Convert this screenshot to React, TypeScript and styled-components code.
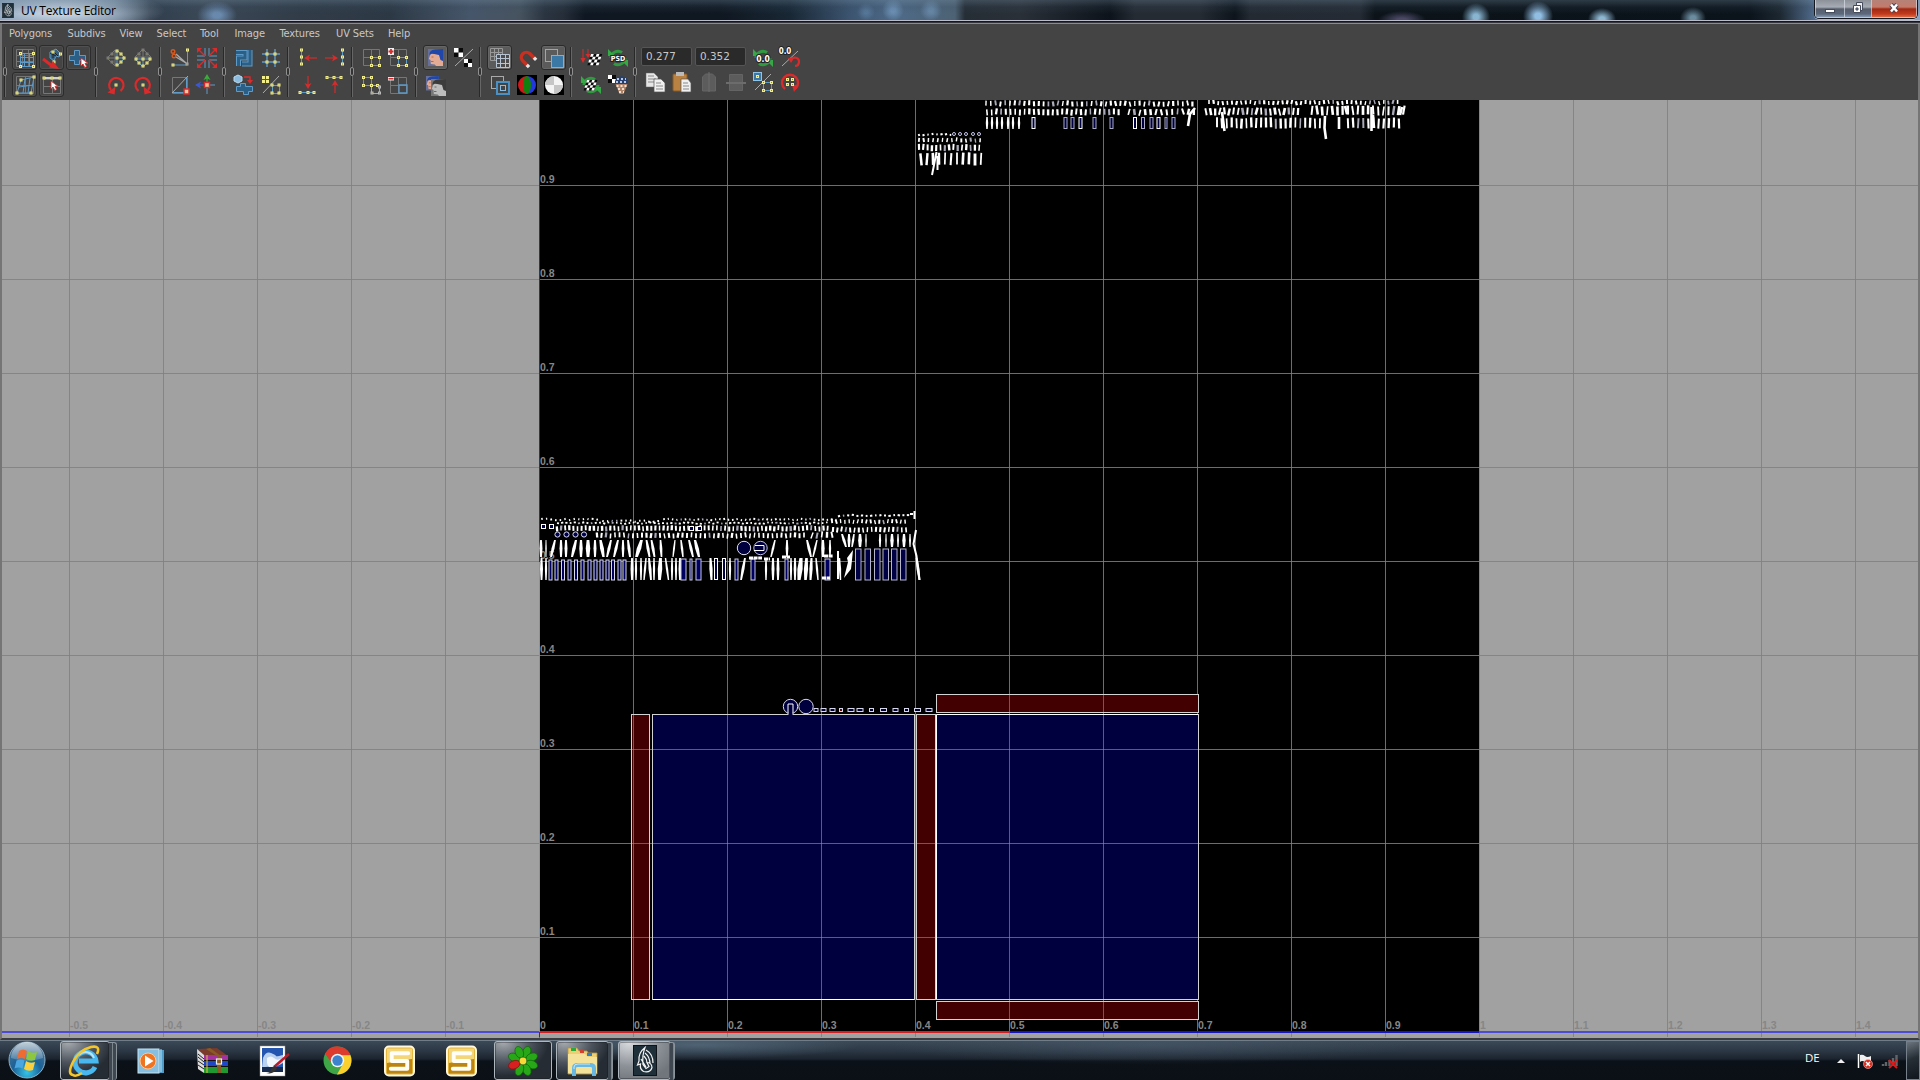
import React from 'react';
import styled, { createGlobalStyle, css } from 'styled-components';

const Global = createGlobalStyle`
  html, body { margin: 0; padding: 0; background: #000; }
  body { width: 1920px; height: 1080px; overflow: hidden; font-family: "Noto Sans", sans-serif; }
  * { box-sizing: border-box; }
  svg { display: block; flex: none; }
`;

const Screen = styled.div`
  width: 1920px;
  height: 1080px;
  display: flex;
  flex-direction: column;
  background: #444;
`;

/* ---------- title bar ---------- */

const blob = (x: number, y: number, rx: number, ry: number, c: string) =>
  `radial-gradient(${rx}px ${ry}px at ${x}px ${y}px, ${c} 0%, ${c} 20%, transparent 100%)`;

const TitleBar = styled.header`
  height: 24px;
  flex: none;
  display: flex;
  align-items: flex-start;
  border-bottom: 1px solid #8a8a8a;
  box-shadow: inset 0 -1px #35363e, inset 0 -2px #17161e, inset 0 -3px #b9bcc8;
  background:
    linear-gradient(180deg, rgba(110,135,155,.35) 0, rgba(60,80,100,.18) 7px, transparent 14px),
    ${blob(60, 11, 105, 22, 'rgba(205,218,232,.9)')},
    ${blob(217, 15, 20, 14, 'rgba(125,165,210,.7)')},
    ${blob(866, 12, 9, 9, 'rgba(105,145,185,.5)')},
    ${blob(893, 10, 11, 11, 'rgba(125,165,205,.65)')},
    ${blob(931, 10, 11, 11, 'rgba(125,165,205,.55)')},
    ${blob(1402, 20, 24, 9, 'rgba(90,85,120,.8)')},
    ${blob(1476, 17, 14, 14, 'rgba(150,198,228,.9)')},
    ${blob(1538, 16, 15, 15, 'rgba(160,208,248,.9)')},
    ${blob(1602, 19, 14, 11, 'rgba(155,200,228,.9)')},
    ${blob(1693, 18, 13, 11, 'rgba(130,170,190,.8)')},
    linear-gradient(90deg, #6e8ba8 0, #587087 115px, #303e4d 150px, #3b4856 205px, #313c48 300px,
      #2c3844 390px, #46566a 470px, #46535f 520px, #2a3440 545px, #252e39 563px, #0f1822 585px,
      #0f1721 720px, #182734 790px, #3c5470 850px, #4e6a88 895px, #4d6274 955px, #252d35 965px,
      #2a3038 1020px, #0d131a 1110px, #252b33 1135px, #252b33 1200px, #0d141b 1235px, #232a32 1250px,
      #242b34 1360px, #0c1319 1375px, #0b131b 1750px, #1c2730 1780px, #6080a8 1825px, #5878a5 1890px, #8ea6c2 1920px);
`;
const TitleText = styled.span`
  margin: 2px 0 0 7px;
  font: 12px/17px "Open Sans", "Noto Sans", sans-serif;
  letter-spacing: -0.22px;
  color: #000;
  flex: 1;
`;
const AppIcon = styled.div`margin: 3px 0 0 2px;`;
const WindowButtons = styled.div`
  display: flex;
  height: 19px;
  width: 104px;
  margin-right: 2px;
  border: 1px solid #15181e;
  border-top: 0;
  border-radius: 0 0 5px 5px;
  overflow: hidden;
  box-shadow: 0 1px rgba(210,220,235,.6);
`;
const WinBtn = styled.div<{ $w: number; $close?: boolean }>`
  width: ${p => p.$w}px;
  display: flex;
  justify-content: center;
  padding-top: 1px;
  border: 1px solid rgba(220,225,235,.65);
  border-top: 0;
  border-right-width: ${p => (p.$close ? 1 : 0)}px;
  background: ${p => p.$close
    ? 'linear-gradient(180deg,#b58278 0,#c47b6b 7px,#9f2a13 9px,#c43a1c 14px,#e07a50 18px)'
    : 'linear-gradient(180deg,#8d9299 0,#a6acb5 7px,#575e6b 9px,#5c687b 14px,#91a8c4 18px)'};
`;

/* ---------- menu + toolbar ---------- */

const Client = styled.main`
  height: 1016px;
  flex: none;
  display: flex;
  flex-direction: column;
  border-left: 2px solid #757575;
  border-right: 2px solid #757575;
  border-bottom: 2px solid #3a3c40;
  background: #444;
`;
const MenuBar = styled.nav`
  height: 19px;
  display: flex;
  padding: 1px 0 0 7px;
  flex: none;
`;
const MenuItem = styled.span<{ $w: number }>`
  width: ${p => p.$w}px;
  font: 11px/17px "DejaVu Sans Condensed", "Noto Sans", sans-serif;
  letter-spacing: -0.12px;
  color: #c8c8c8;
  white-space: nowrap;
`;
const ToolBar = styled.div`
  height: 57px;
  display: flex;
  flex: none;
  padding-top: 1px;
`;
const Group = styled.div`
  display: flex;
  padding-right: 1px;
`;
const Grip = styled.div`
  width: 9px;
  height: 54px;
  padding: 3px 0 0 0;
`;
const Rows = styled.div`
  display: flex;
  flex-direction: column;
`;
const Row = styled.div<{ $lift?: number }>`
  display: flex;
  align-items: center;
  height: 27px;
  margin-top: ${p => -(p.$lift ?? 0)}px;
`;
const Tool = styled.div<{ $look?: 'raised' | 'on' }>`
  width: 25px;
  height: 25px;
  margin: 1px;
  display: flex;
  align-items: center;
  justify-content: center;
  border: 1px solid transparent;
  border-radius: 3px;
  ${p => p.$look === 'raised' && css`border-color: #2c2c2c; box-shadow: inset 0 0 0 1px #505050;`}
  ${p => p.$look === 'on' && css`border-color: #2a2a2a; background: #5b5b5b; box-shadow: inset 0 0 0 1px #666;`}
`;
const NumField = styled.div`
  width: 51px;
  height: 19px;
  margin: 0 3px 2px 0;
  padding-left: 4px;
  background: #2a2a2a;
  border: 1px solid #555;
  border-radius: 2px;
  color: #c8c8c8;
  font: 10.4px/16px "DejaVu Sans", sans-serif;
`;

/* ---------- icons ---------- */

type P = [number, number];
const Y = '#f2ee8c';
const B = '#5e9bc8';
const G = '#777';
const R = '#d92b2b';

const Dots = ({ p, c = Y }: { p: P[]; c?: string }) => (
  <g>
    {p.map(([x, y], i) => (
      <g key={i}>
        <rect x={x - 1.5} y={y - 1.5} width="3" height="3" fill={c} />
        <rect x={x - 0.5} y={y - 0.5} width="1" height="1" fill="#8d8a40" />
      </g>
    ))}
  </g>
);
const L = ({ d, c = B, w = 1, f = 'none' }: { d: string; c?: string; w?: number; f?: string }) => (
  <path d={d} stroke={c} strokeWidth={w} fill={f} />
);
const Cursor = ({ x, y }: { x: number; y: number }) => (
  <path transform={`translate(${x} ${y})`} d="M0 0v8l2-2 1.8 3.5 1.8-1L4 5.3h3z" fill="#fff" stroke={R} strokeWidth=".9" />
);
const Arrow = ({ r, x = 12, y = 12, c = R }: { r: number; x?: number; y?: number; c?: string }) => (
  <g transform={`translate(${x} ${y}) rotate(${r})`}>
    <path d="M-6 0H3" stroke={c} strokeWidth="1.2" />
    <path d="M1-3.5L7 0 1 3.5 2.5 0z" fill={c} />
  </g>
);
const Spin = ({ flip, c = R }: { flip?: boolean; c?: string }) => (
  <g transform={flip ? 'matrix(-1 0 0 1 24 0)' : undefined}>
    <path d="M7.500 18A7.200 7.200 0 1 1 17 17" fill="none" stroke={c} strokeWidth="2.2" />
    <path d="M12.500 13.500l1 8 7-2z" fill={c} />
  </g>
);
const Sync = () => (
  <g fill="none" stroke="#2f9a3f" strokeWidth="3">
    <path d="M5 12a7 7 0 0 1 11-5.500" /><path d="M19 12a7 7 0 0 1-11 5.500" />
    <path d="M2 3v7h7z M22 21v-7h-7z" fill="#36a846" stroke="none" />
  </g>
);
const Checks = ({ x, y, n = 4, s = 2.5, skew = 0 }: { x: number; y: number; n?: number; s?: number; skew?: number }) => (
  <g transform={`translate(${x} ${y}) skewX(${skew})`}>
    <rect width={n * s} height={n * s} fill="#0a0a0a" />
    {Array.from({ length: n * n }, (_, i) => [i % n, Math.floor(i / n)])
      .filter(([a, b]) => (a + b) % 2 === 0)
      .map(([a, b]) => <rect key={`${a}-${b}`} x={a * s} y={b * s} width={s} height={s} fill="#fff" />)}
  </g>
);
const Plus = ({ d }: { d: string }) => <path d={d} fill="#2b5f86" stroke={B} strokeWidth="1" />;
const Band = ({ d }: { d: string }) => (
  <g fill="none">
    <path d={d} stroke={B} strokeWidth="5" />
    <path d={d} stroke="#2b5f86" strokeWidth="3" />
  </g>
);
const Face = ({ x, y, gray }: { x: number; y: number; gray?: boolean }) => (
  <g transform={`translate(${x} ${y})`}>
    <rect width="15" height="17" fill={gray ? '#777' : '#66709a'} />
    <path d="M2.500 5L.8 10l1.700 1 .3 4 4 .5L8 17h7V5z" fill={gray ? '#bdbdbd' : '#e3ab94'} />
    <path d="M1.500 6Q1 1 7 .5L15 0v12l-2.500-1L11 6 4 4.500z" fill={gray ? '#3c3c3c' : '#1f46a8'} />
    <path d="M3.500 8h2M3 12.500h2.500" stroke={gray ? '#555' : '#9a5c4c'} strokeWidth=".8" />
  </g>
);
const Tag = ({ x, y, s, children }: { x: number; y: number; s: number; children: string }) => (
  <text x={x} y={y} textAnchor="middle" fontSize={s} fontWeight="bold" fontFamily="DejaVu Sans Condensed, sans-serif" fill="#fff" stroke="#222" strokeWidth="2" paintOrder="stroke">{children}</text>
);

const ICONS: Record<string, React.ReactNode> = {
  lattice: <><L c={G} d="M3.500 3.500h17v17h-17zM3.500 9.500h17M3.500 15.500h17M9.500 3.500v17M15.500 3.500v17" /><L d="M7.500 7.500h13v13h-13zM7.500 11.500h13M7.500 16.500h13M11.500 7.500v13M16.500 7.500v13" /><Dots p={[[7.500, 7.500], [20.500, 7.500], [7.500, 20.500], [20.500, 20.500]]} /></>,
  smudge: <><path d="M10 6l6-3 5 5-2 3-3-1-2 5-4-3z" fill="#38617f" stroke={B} /><L c="#222" d="M10 7l6 3M13 5l5 5M13 4v8" /><Dots p={[[13, 6], [20.500, 8], [14, 16]]} /><path d="M3 13l8 6" stroke={R} strokeWidth="3" /><path d="M13 15l6 8-10-1.500z" fill={R} /></>,
  moveshell: <><Plus d="M2.500 9.500h5v-5h5v5h6v5h-6v4h-5v-4h-5z" /><Cursor x={14} y={12} /></>,
  warp: <><L c={G} d="M3.500 3.500h17v17h-17zM3.500 12.500h17M12.500 3.500v17" /><L d="M8 7l13-3-3 16H4zM6 14l14-2M12 6l-2 14M17 5l-2 15" /><Dots p={[[8, 7], [21, 4], [4, 20], [18, 20]]} /></>,
  moveuv: <><L c={G} d="M3.500 6.500h17v14h-17zM12.500 6.500v14M3.500 13.500h17" /><L c="#fff" w={1.5} d="M4 5h17" /><Dots p={[[4, 5], [20, 5], [12, 5]]} /><Cursor x={11} y={8} /></>,
  flipu: <><L c={G} d="M11 4l-8 8 8 8zM3 12h8" /><L d="M13 4l8 8-8 8zM13 12h8" /><Dots p={[[13, 5], [13, 12], [13, 19], [17, 8], [20, 12], [17, 16]]} /><Dots c="#777" p={[[8, 8], [4, 12], [8, 16]]} /></>,
  flipv: <><L c={G} d="M4 11l8-8 8 8zM12 3v8" /><L d="M4 13h16l-8 8zM12 13v8" /><Dots p={[[5, 13], [12, 13], [19, 13], [8, 17], [16, 17], [12, 20]]} /><Dots c="#777" p={[[12, 4], [8, 8], [16, 8]]} /></>,
  rotl: <><Spin flip /><Dots p={[[12, 12]]} /></>,
  rotr: <><Spin /><Dots p={[[12, 12]]} /></>,
  cut: <><L d="M19.500 5v14H4" /><Dots p={[[19.500, 4], [5, 19]]} /><Dots c="#aaa" p={[[19, 18]]} /><L c="#aaa" w={1.4} d="M8 8l10 9M8 11l10 6" /><circle cx="5" cy="5.500" r="1.800" fill="none" stroke="#d8581e" strokeWidth="1.4" /><circle cx="6" cy="10" r="1.800" fill="none" stroke="#d8581e" strokeWidth="1.4" /></>,
  split: <><L d="M10 2v8H2M14 2v8h8M10 22v-8H2M14 22v-8h8" /><path d="M10 10L3 3M14 10l7-7M10 14l-7 7M14 14l7 7" stroke={R} strokeWidth="1.4" /><path d="M2 2h5L2 7zM22 2h-5l5 5zM2 22h5l-5-5zM22 22h-5l5-5z" fill={R} /></>,
  move: <><L c={G} d="M4.500 4.500h15v16h-15z" /><L c="#aaa" d="M4 20L20 3" /><L d="M18.500 5v14.500H5" /><rect x="16" y="16" width="5" height="5" fill="#f4c7a0" stroke={R} strokeWidth="1.5" /></>,
  axis: <><Arrow r={-90} x={12} y={8} c="#3aad3a" /><Arrow r={180} x={7} y={12} c="#3c58d8" /><L d="M14 12h6M12 14v7" /><rect x="9.5" y="9.5" width="5" height="5" fill="#e8c090" stroke={R} strokeWidth="1.4" /></>,
  unfold: <><Band d="M4 6.500h9v5.500H6.500V20" /><Band d="M18 4v14h-8" /></>,
  gridsew: <><L w={1.4} d="M8 3v18M16 3v18M3 8h18M3 16h18" /><Dots p={[[8, 8], [16, 8], [8, 16], [16, 16]]} /></>,
  layout: <><Plus d="M4.500 13.500h4v-3h5v3h7v5h-4v3h-5v-3h-7z" /><path d="M2 4l4-2 4 2v4L6 10 2 8z" fill="#8cbde0" stroke="#b9dcf2" /><path d="M12 4h6v4" fill="none" stroke={R} strokeWidth="1.4" /><path d="M15 7h6l-3 4z" fill={R} /></>,
  align: <><L c="#aaa" d="M4 20L20 3" /><rect x="3" y="3" width="7" height="7" fill={Y} /><L c="#555" d="M6.5 3v7M3 6.5h7" /><L d="M13.500 12.500h7v8h-7z" /><Dots p={[[13, 12], [20, 12], [13, 20], [20, 20]]} /></>,
  alignl: <><L d="M5.500 4v15" /><Dots p={[[5.500, 4], [5.500, 11], [5.500, 18]]} /><Arrow r={180} x={15} /></>,
  alignr: <><L d="M19.500 4v15" /><Dots p={[[19.500, 4], [19.500, 11], [19.500, 18]]} /><Arrow r={0} x={8} /></>,
  alignb: <><L d="M4 19.500h15" /><Dots p={[[4, 19.500], [12, 19.500], [18, 19.500]]} /><Arrow r={90} y={9} /></>,
  alignt: <><L d="M4 4.500h15" /><Dots p={[[4, 4.500], [11, 4.500], [18, 4.500]]} /><Arrow r={-90} y={14} /></>,
  iso: <><L c={G} d="M3.500 3.500h16v16h-16zM3.500 11.500h16M11.500 3.500v16" /><L d="M11.500 11.500h8v8h-8z" /><Dots p={[[11.500, 11.500], [19.500, 11.500], [11.500, 19.500], [19.500, 19.500]]} /></>,
  isoadd: <><L c={G} d="M3.500 3.500h16v16h-16zM3.500 11.500h16M11.500 3.500v16" /><L d="M11.500 11.500h8v8h-8z" /><Dots p={[[11.500, 11.500], [19.500, 11.500], [11.500, 19.500], [19.500, 19.500]]} /><rect x="1" y="2" width="6" height="7" fill="#eee" /><L c={R} w={1.8} d="M1.500 5.500h5M4 3v5" /></>,
  isosel: <><L d="M3.500 4.500h8v8h-8zM11.500 12.500v7" /><L c="#aaa" d="M11.500 12.500h8v8h-8z" /><Dots p={[[3.500, 4.500], [11.500, 4.500], [3.500, 12.500], [11.500, 12.500], [17.500, 12.500]]} /><Dots c="#bbb" p={[[12, 20], [19.500, 20], [19.500, 14]]} /></>,
  isosub: <><L c={G} d="M3.500 4.500h16v16h-16zM3.500 12.500h16M11.500 4.500v16" /><L w={1.3} d="M12 12h8v8h-8z" /><rect x="1" y="4" width="6" height="3.500" fill="#eee" /><L c={R} w={1.5} d="M1.500 5.700h5" /></>,
  image: <Face x={4} y={3} />,
  checkdim: <><L c="#aaa" d="M4 20L22 3" /><Checks x={3} y={2} n={2} s={4.5} /><Checks x={13} y={13} n={2} s={4} /></>,
  imgratio: <><g transform="translate(2 3) scale(.85)"><Face x={0} y={0} /></g><g transform="translate(7 6)"><Face x={0} y={0} gray /></g></>,
  grid: <><L c="#999" d="M2.500 2.500h12v12h-12zM2.500 6.500h12M2.500 10.500h12M6.500 2.500v12M10.500 2.500v12" /><rect x="8.500" y="8.500" width="13" height="13" fill="#4c4c4c" /><L c="#b6c4d4" d="M8.500 8.500h13v13h-13zM8.500 12.500h13M8.500 17.500h13M12.500 8.500v13M17.500 8.500v13" /></>,
  magnet: <g transform="translate(1 1) rotate(-45 11 11) scale(.92)"><path d="M6.500 18v-7a5.500 5.500 0 0 1 11 0v7" fill="none" stroke="#c83020" strokeWidth="3.600" /><path d="M4.700 17h3.600v3.500H4.700zM15.700 17h3.600v3.500h-3.600z" fill="#e8e8e8" /></g>,
  shade: <><rect x="3.500" y="3.500" width="12" height="12" fill="none" stroke="#8fa9bd" /><rect x="9.500" y="9.500" width="12" height="12" fill="#3b78a6" stroke="#79b2dc" /></>,
  border: <><rect x="3.500" y="3.500" width="12" height="12" fill="none" stroke="#aaa" /><rect x="9" y="9" width="12" height="12" fill="#444" stroke="#4a90c4" strokeWidth="2" /><rect x="12.500" y="12.500" width="5" height="5" fill="none" stroke="#8bbbe0" /></>,
  rgb: <><rect x="2" y="2" width="20" height="20" fill="#000" /><path d="M12 3a9 9 0 0 0 0 18z" fill="#d01818" /><path d="M12 3a9 9 0 0 1 0 18z" fill="#2438e0" /><ellipse cx="12" cy="12" rx="4" ry="9" fill="#12800f" /></>,
  alpha: <><rect x="2" y="2" width="20" height="20" fill="#000" /><circle cx="12" cy="12" r="9" fill="#f4f4f4" /><path d="M12 3v9H3a9 9 0 0 1 9-9zM12 21v-9h9a9 9 0 0 1-9 9z" fill="#c6c6c6" /></>,
  bake: <><Checks x={12} y={8} n={4} s={2.800} skew={-18} /><path d="M4 3v10M9 3v6" stroke={R} /><path d="M1.500 12h5L4 17zM6.500 8h5L9 12z" fill={R} /></>,
  psd: <><Sync /><Tag x={12} y={15} s={7}>PSD</Tag></>,
  rebake: <><Sync /><Checks x={8} y={7} n={4} s={2.600} skew={-18} /></>,
  checkcone: <><Checks x={2} y={2} n={2} s={4} /><path d="M9.500 11h12l-4 10h-4z" fill="#b08468" /><path d="M10.500 13h10M12 16h7M13 19h5" stroke="#f1ded0" strokeDasharray="2 2" strokeWidth="2" /><path d="M9 11q-1-7 6.500-8 7.500 1 6.500 8z" fill="#28406e" /><path d="M10 9h12M11 6h9" stroke="#b7c8e6" strokeDasharray="2 2" strokeWidth="2" /></>,
  uvsync: <><Sync /><Tag x={12} y={15.5} s={8.5}>0.0</Tag></>,
  uvabs: <><L c="#aaa" d="M4 20L20 5" /><Tag x={7} y={8} s={8}>0.0</Tag><path d="M13 14a4.200 4.200 0 1 1 4 6" fill="none" stroke={R} strokeWidth="2.200" /><path d="M10 12h6l-3 5z" fill={R} /></>,
  copy: <><path d="M3 3h8l4 4v10H3z" fill="#e6e6e6" stroke="#666" strokeWidth=".5" /><path d="M5 6h6M5 9h8M5 12h8" stroke="#888" /><path d="M11 9h7l4 4v9H11z" fill="#f0f0f0" stroke="#555" strokeWidth=".7" /><path d="M13 13h5M13 16h7M13 19h7" stroke="#888" /></>,
  paste: <><rect x="3" y="4" width="14" height="17" rx="1" fill="#b98142" stroke="#8a5a24" /><rect x="6" y="2" width="8" height="4" fill="#bbb" /><path d="M11 9h7l3 4v9H11z" fill="#f0f0f0" stroke="#555" strokeWidth=".7" /><path d="M13 13h5M13 16h6M13 19h6" stroke="#888" /></>,
  dimu: <g fill="#5c5c5c" stroke="#646464"><path d="M5.500 7l3-3h7l3 3v14h-13z" /><path d="M12 2v20" stroke="#6c6c6c" /></g>,
  dimv: <g fill="#5c5c5c" stroke="#646464"><path d="M5.500 4.500h13v16h-13z" /><path d="M2 13h20" stroke="#6c6c6c" strokeWidth="2" /></g>,
  shellswap: <><L c="#aaa" d="M4 20L20 4" /><rect x="2.500" y="2.500" width="8" height="8" fill="#3b78a6" stroke="#8fc4ea" /><Dots p={[[6.500, 6.500]]} /><L d="M12.500 12.500h8v8h-8z" /><Dots p={[[12.500, 12.500], [20.500, 12.500], [12.500, 20.500], [20.500, 20.500]]} /></>,
  cycle: <><path d="M7 19A8 8 0 1 1 17 19" fill="none" stroke={R} strokeWidth="2.400" /><path d="M14 15h7l-5 7z" fill={R} /><Dots p={[[9.5, 9.5], [14.5, 9.5], [9.5, 14.5], [14.5, 14.5]]} /></>,
};

const Icon = ({ name, look }: { name: string; look?: 'raised' | 'on' }) => (
  <Tool $look={look}>
    <svg width="24" height="24" viewBox="0 0 24 24" overflow="visible">{ICONS[name]}</svg>
  </Tool>
);
const Handle = () => (
  <Grip>
    <svg width="6" height="50" viewBox="0 0 6 50">
      <path d="M2.500 0v20M2.500 29v21" stroke="#292929" />
      <path d="M3.500 0v20M3.500 29v21" stroke="#666" />
      <rect x="1.500" y="20.500" width="3" height="8" rx="1.500" fill="#333" stroke="#999" strokeWidth=".9" />
    </svg>
  </Grip>
);

const GROUPS: [string, string][] = [
  ['lattice* smudge* moveshell*', 'warp* moveuv*'],
  ['flipu flipv', 'rotl rotr'],
  ['cut split', 'move axis'],
  ['unfold gridsew', 'layout align'],
  ['alignl alignr', 'alignb alignt'],
  ['iso isoadd', 'isosel isosub'],
  ['image! checkdim', 'imgratio'],
  ['grid! magnet shade!', 'border rgb alpha'],
  ['bake psd', 'rebake checkcone'],
];
const renderIcons = (s: string) =>
  s.split(' ').map(n => (
    <Icon key={n} name={n.replace(/[*!]/, '')} look={n.endsWith('*') ? 'raised' : n.endsWith('!') ? 'on' : undefined} />
  ));

/* ---------- UV canvas ---------- */

const noise = (seed: number) => {
  let s = seed;
  return () => {
    s = (s * 16807) % 2147483647;
    return s / 2147483647;
  };
};

/* A strip of thin UV shells: seed, x0, x1, top, height, step, lean, weight */
const strip = (seed: number, x0: number, x1: number, y: number, h: number, step: number, lean: number, w: number) => {
  const r = noise(seed * 7919);
  r();
  const out: React.ReactNode[] = [];
  for (let x = x0; x <= x1; x += step) {
    const dx = (r() - 0.5) * lean * 0.6;
    const dy = (r() - 0.5) * 1.4;
    const wt = w * (0.85 + r() * 0.6);
    const tone = r() > 0.86 ? '#a9a9b8' : '#fff';
    out.push(
      <path key={`${seed}-${x}`} stroke={tone} strokeWidth={wt} d={`M${(x + dx).toFixed(1)} ${(y + dy).toFixed(1)}L${(x - dx).toFixed(1)} ${(y + dy + h).toFixed(1)}`} />,
    );
  }
  return <g key={seed}>{out}</g>;
};

/* Slivers listed one by one: each is [x, lean, weight] */
const slivers = (key: string, list: number[][], y: number, h: number) => (
  <g key={key} fill="#fff">
    {list.map(([x, d = 0, w = 1.3], i) => {
      const a = w * 0.45;
      const b = w * 0.75;
      return <path key={i} d={`M${x + d - a} ${y}h${2 * a}L${x + b} ${y + h / 2}L${x - d + a} ${y + h}h${-2 * a}L${x - b} ${y + h / 2}z`} />;
    })}
  </g>
);
const Shell = ({ x, y, w, h, c = '#000044', s = '#b9b9d8' }: { x: number; y: number; w: number; h: number; c?: string; s?: string }) => (
  <rect x={x} y={y} width={w} height={h} fill={c} stroke={s} />
);

const X0 = 539.5;
const Y0 = 1031.5;
const STEP = 94;
const cols = Array.from({ length: 20 }, (_, i) => i - 5);
const rows = Array.from({ length: 10 }, (_, i) => i);
const fmt = (n: number) => (n === 0 ? '0' : n === 10 ? '1' : (n / 10).toFixed(1));

const BLUE = '#00003f';
const RED = '#420000';
const shells: [number, number, number, number, string][] = [
  [631.5, 714.5, 18, 285, RED],
  [652.5, 714.5, 262, 285, BLUE],
  [916.5, 714.5, 19, 285, RED],
  [936.5, 714.5, 262, 285, BLUE],
  [936.5, 694.5, 262, 18, RED],
  [936.5, 1001.5, 262, 18, RED],
];

const UvCanvas = () => (
  <svg width="1916" height="938" viewBox="2 100 1916 938">
    <rect x="2" y="100" width="1916" height="938" fill="#a1a1a1" />
    <rect x="540" y="100" width="939" height="933" fill="#000" />

    <g stroke="#808080" strokeOpacity=".85">
      {cols.map(c => <path key={c} d={`M${X0 + c * STEP} 100V1037`} />)}
      {rows.slice(1).map(r => <path key={r} d={`M2 ${Y0 - r * STEP}H1918`} />)}
    </g>
    {shells.map(([x, y, w, h, c], i) => <rect key={i} x={x} y={y} width={w} height={h} fill={c} />)}
    <g stroke="#8a8ae0" strokeOpacity=".62">
      {[727.5, 821.5].map(x => <path key={x} d={`M${x} 715V999`} />)}
      {[1009.5, 1103.5].map(x => <path key={x} d={`M${x} 715V999`} />)}
      {[749.5, 843.5, 937.5].map(y => <path key={y} d={`M653 ${y}H914M937 ${y}H1198`} />)}
    </g>
    <g stroke="#c08080" strokeOpacity=".6">
      <path d="M633.500 715V999M1009.500 695v17M1103.500 695v17M1009.500 1002v17M1103.500 1002v17" />
      {[749.5, 843.5, 937.5].map(y => <path key={y} d={`M632 ${y}H649M917 ${y}H935`} />)}
    </g>

    <g fill="none" stroke="#d2d2d2">
      {shells.map(([x, y, w, h], i) => <rect key={i} x={x} y={y} width={w} height={h} />)}
      <path d="M653 999.500h261M936.500 715v284M937 714.500h261" stroke="#fff" />
    </g>

    <g fontFamily="Liberation Sans, Arial, sans-serif" fontWeight="bold" fontSize="10.500" fill="#868686">
      {cols.map(c => <text key={c} x={X0 + c * STEP + 0.5} y="1029">{fmt(c)}</text>)}
      {rows.slice(1).map(r => <text key={r} x="540" y={Y0 - r * STEP - 3}>{fmt(r)}</text>)}
    </g>

    <path d="M2 1032H539M1010 1032H1918" stroke="#4b4bd6" strokeWidth="2" />
    <path d="M1010 1032H1479" stroke="#1515c8" strokeWidth="2" />
    <path d="M540 1032H1010" stroke="#d02024" strokeWidth="2" />
    <path d="M539.500 100V562M539.500 1032v5.500" stroke="#2020f0" />
    <path d="M539.500 562V1031" stroke="#22e022" />

    {/* left shell cluster */}
    {strip(11, 542, 600, 518.5, 2, 4.6, 1, 1.3)}
    {strip(12, 603, 660, 520, 2, 4.6, 1, 1.3)}
    {strip(13, 664, 836, 518.5, 2, 4.3, 1.2, 1.3)}
    {strip(14, 839, 911, 514.5, 2, 4.6, 1, 1.7)}
    {strip(15, 558, 830, 522.2, 1.8, 4.2, 1, 1.6)}
    {strip(16, 832, 909, 519.5, 4, 4.3, 2, 1.4)}
    {strip(17, 557, 828, 525.8, 5, 4.1, .8, 1.7)}
    {strip(18, 833, 909, 527, 5, 4.3, 1.6, 1.5)}
    {strip(19, 597, 808, 533, 5, 4.5, 1.6, 1.6)}
    {strip(20, 812, 835, 532, 6, 5, 4, 1.7)}
    <Shell x={541.5} y={524.5} w={4} h={4} s="#fff" /><Shell x={549.5} y={524.5} w={4} h={4} s="#fff" />
    <Shell x={689.5} y={526.5} w={4} h={4} s="#fff" /><Shell x={697.5} y={526.5} w={4} h={4} s="#fff" />
    {[557.5, 566.5, 575.5, 584].map(x => <circle key={x} cx={x} cy={534.5} r={2.6} fill="#000050" stroke="#dcdcf0" />)}
    {slivers('mid', [[541, 0, 2], [546, 0, 1], [553, 2, 2], [561, 0, 2], [566, 0, 2], [574, 2, 2.3], [581, 0, 2.3], [588, 0, 3], [595, 0, 2], [602, -1.5, 2.6], [609, 2, 2], [616, 2, 2], [623, 0, 1.8], [629, -1, 2], [639, 2.5, 3], [648, -1.5, 2], [653, -1.5, 2], [661, -.5, 1.8], [674, 1, 1.3], [682, -1, 1.6], [691, -2, 2], [697, -2, 2.5], [773, 2, 1.6], [787, 0, 1.8], [809, -2, 2], [815, 2, 1.5], [823, 0, 2.2], [830, 0, 1.5]], 540, 17)}
    {slivers('mid2', [[844, -2, 2], [849, 0, 2], [853, 1, 1.6], [860, 0, 2.5], [866, 0, 1], [880, 0, 1.5], [886, 0, 1], [892, 0, 2.3], [898, 0, 1.3], [904, 0, 2.3], [910, 0, 1.3]], 534, 13)}
    <circle cx="744" cy="548" r="6.700" fill="#00003f" stroke="#e0e0f0" />
    <circle cx="760.500" cy="548" r="6.700" fill="#00003f" stroke="#c0c0e0" />
    <path d="M755 545.500h9v5h-10" fill="none" stroke="#fff" />
    {[549, 555, 561.5, 568, 574.5, 581, 588, 594, 600, 606, 611.5, 618, 623].map(x => <Shell key={x} x={x} y={560} w={3} h={20} c="#000060" s="#d8d8ea" />)}
    {slivers('low', [[541.5, 0, 2], [546, 0, 1.5], [632, 0, 2], [636, 0, 1.5], [641, 0, 1.5], [645, 1, 1.5], [650, -1, 2], [654, 0, 1.5], [660, .5, 3], [667, -1.5, 1.5], [672, 0, 1.5], [676, 0, 1.5], [680, 0, 2], [711, -.5, 2.2], [730, 0, 1.5], [743, 2, 2], [766, 0, 1.5], [773, 0, 2], [778, 0, 2], [791, 0, 1.5], [795, 0, 1.8], [800, 1, 3.5], [806, .5, 2.8], [811, .5, 2.2], [817, -1, 1.5], [840, -.5, 1.5], [918, -1.5, 2]], 558, 22)}
    {[[681, 5], [690, 2], [696, 5], [735, 3], [751, 4], [785, 3], [825, 5]].map(([x, w]) => <Shell key={x} x={x} y={559} w={w} h={21} c="#000060" s="#c8c8e0" />)}
    <Shell x={714.5} y={558.5} w={3} h={21} s="#fff" /><Shell x={722.5} y={558.5} w={3} h={21} s="#fff" />
    <path d="M749 558h13M782 557h8M824 556h9M764 559h6M822 578h8" stroke="#fff" strokeWidth="3" strokeDasharray="4 .6" />
    <path d="M853 550l-6 8 1 4-4 16 7-9 1-9z" fill="#fff" />
    <path d="M838 551v28M914.500 511v8M916 530l-2.500 14 3 12 3 24M913 514h-3" stroke="#fff" strokeWidth="2" fill="none" />
    {[855.5, 865, 874.5, 883, 891.5, 900.5].map(x => <Shell key={x} x={x} y={549} w={5.5} h={31} s="#b4b4cc" />)}

    {/* upper shell clusters */}
    {strip(31, 919, 952, 133.5, 2, 4.5, 1, 1.6)}
    {strip(32, 919, 982, 138, 4, 4.7, 1.5, 1.5)}
    {strip(33, 919, 983, 144.500, 6, 4.3, 1, 1.7)}
    {strip(34, 921, 982, 153, 12, 6, 2, 2)}
    <path d="M936.500 152l-2.500 13-2 10M937.500 156v14" stroke="#fff" strokeWidth="2" fill="none" />
    {[954, 960, 966, 973, 979].map(x => <circle key={x} cx={x} cy={134} r={1.5} fill="#000" stroke="#c8c8ee" />)}
    {strip(41, 986, 1197, 101, 5, 4.8, 2, 1.6)}
    {strip(42, 987, 1120, 109, 6, 4.7, 1.5, 1.7)}
    {strip(43, 1129, 1197, 109, 6, 5.4, 4, 1.8)}
    {strip(44, 1209, 1400, 100.5, 4, 4.6, 2, 1.6)}
    {strip(45, 1206, 1298, 108, 7, 4.6, 3.5, 1.9)}
    {strip(46, 1312, 1404, 106, 9, 5.1, 3, 1.9)}
    {slivers('top', [987, 992, 997, 1002, 1008, 1013, 1019].map(x => [x, 0, 1.6]), 117, 12)}
    {[1032, 1064, 1071, 1079, 1093, 1110, 1133.5, 1141.5, 1150, 1157, 1165, 1172].map((x, i) => <Shell key={x} x={x} y={117.5} w={i === 10 ? 2 : 3} h={11} c="#000040" s={i % 3 ? '#aaaac4' : '#fff'} />)}
    {strip(47, 1217, 1322, 118, 10, 4.9, 1, 1.8)}
    {strip(48, 1348, 1400, 118, 10, 5.1, 1, 1.8)}
    <path d="M1195 108l-5 6-1 6-1 6M1222 112l2.500 19M1325 116l-.5 12 1.500 11M1339 117v12M1345 106l2 8M1371.500 107v24M1373 115l1 13M1402 107l-2 8" stroke="#fff" strokeWidth="2.600" fill="none" />

    {/* small chain */}
    <g fill="#00003f" stroke="#d8d8ec">
      <circle cx="790.500" cy="706.500" r="7.200" /><circle cx="806" cy="706.500" r="7.200" />
      <path d="M788.500 714h4" stroke="#00003f" strokeWidth="2" />
      <path d="M788 713.500v-9.500h5v9.500" fill="none" stroke="#fff" />
      {[[814, 4], [821, 5], [830, 5], [839.5, 3], [848, 6], [857, 6], [869.5, 4], [880.5, 6], [893, 5], [904.5, 4], [914.5, 6], [926, 6]].map(([x, w], i) => (
        <rect key={i} x={x} y={708.5} width={w} height={3} fill={i === 3 ? '#600000' : '#000030'} />
      ))}
    </g>
  </svg>
);

/* ---------- taskbar ---------- */

const TaskBar = styled.footer`
  height: 40px;
  flex: none;
  display: flex;
  align-items: stretch;
  border-top: 1px solid #6f7d8b;
  background:
    radial-gradient(160px 14px at 700px 4px, rgba(95,120,140,.6), transparent),
    radial-gradient(260px 20px at 1150px 4px, rgba(90,110,130,.35), transparent),
    linear-gradient(180deg, #3b4855 0, #2b3744 10px, #1b242e 18px, #0b1118 20px, #0b1017 40px);
`;
const Orb = styled.div`
  width: 60px;
  padding-left: 8px;
`;
const Slots = styled.div`
  display: flex;
  gap: 4px;
  flex: 1;
`;
const Slot = styled.div<{ $mode?: 'open' | 'active'; $extra?: number }>`
  width: ${p => 58 - (p.$extra ?? 0)}px;
  margin-right: ${p => p.$extra ?? 0}px;
  height: 39px;
  display: flex;
  position: relative;
  align-items: center;
  justify-content: center;
  ${p => p.$mode && css`
    border: 1px solid #aeb6be;
    border-radius: 3px;
    box-shadow: inset 0 0 0 1px rgba(20,24,30,.35);
    background: ${p.$mode === 'active'
      ? 'radial-gradient(50px 40px at 20% 0, #dadcdf, #8d9299 60%, #71767c)'
      : 'radial-gradient(45px 34px at 15% 0, #a6abb0, #4c535c 60%, #252c34)'};
  `}
  ${p => p.$extra && css`
    &::after {
      content: '';
      position: absolute;
      top: 0;
      right: -${p.$extra}px;
      width: ${p.$extra - 1}px;
      height: 37px;
      border-right: 1px solid #8b939b;
      border-top: 1px solid #8b939b;
      border-radius: 0 3px 3px 0;
      background: repeating-linear-gradient(90deg, #3e4650 0 3px, #7b838b 3px 4px);
    }
  `}
`;
const Tray = styled.div`
  display: flex;
  align-items: flex-start;
  color: #fff;
  font: 11.5px/17px "Open Sans", "Noto Sans", sans-serif;
`;
const Lang = styled.span`width: 30px; margin-top: 8px;`;
const TrayIcons = styled.div`width: 71px; padding: 10px 0 0 1px;`;
const ShowDesktop = styled.div`
  width: 14px;
  height: 39px;
  border: 1px solid #76808a;
  background: linear-gradient(160deg, #6c747d, #262e36 45%, #10161c);
`;

const SIcon = () => (
  <svg width="31" height="32" viewBox="0 0 32 32">
    <rect x="1" y="1" width="30" height="30" rx="4" fill="#e3b53a" stroke="#fff8df" strokeWidth="2" />
    <path d="M3 3h26v11L3 19z" fill="#f3d67c" /><path d="M3 18l26-4v15H3z" fill="#bd850f" />
    <path d="M25 8H8M8 16h16v8H7" fill="none" stroke="#fffdf4" strokeWidth="4" strokeLinejoin="round" strokeLinecap="round" />
    <path d="M8 8v8" stroke="#fffdf4" strokeWidth="4" />
  </svg>
);
const MayaMark = () => (
  <g>
    <rect x=".5" y=".5" width="23" height="30" fill="#20303a" stroke="#0d1318" />
    <path d="M12 2.500Q5 8 6 16l-1.500 4 3-1q-1 5 3 7.500 7 1.500 8.500-4-.5-5-5-5l2 4-3 2-3-4q-1-9 2-17zM13 5q7 4 7 13M12 8q5 4 5 11M11 11q3 3 3 7M8 14l5 8" fill="none" stroke="#f4f4f4" strokeWidth="1.200" />
  </g>
);

const IeIcon = () => (
  <svg width="34" height="34" viewBox="0 0 34 34">
    <path d="M27 23a10.500 10.500 0 1 1 1-6H11" fill="none" stroke="#49b8ee" strokeWidth="5" />
    <path d="M26 14a9 9 0 0 0-15-3" fill="none" stroke="#b5e6fb" strokeWidth="2" />
    <path d="M29 10q4-9-6-7Q11 6 5 18T5 31q3 2 9-2" fill="none" stroke="#f5c52c" strokeWidth="2.600" />
  </svg>
);
const WmpIcon = () => (
  <svg width="28" height="28" viewBox="0 0 28 28">
    <path d="M7 3h20v23H7z" fill="#4f9cc8" /><path d="M24 2v23M21 2v23" stroke="#b9e0f4" />
    <rect x="1" y="2" width="21" height="24" fill="#87bfe0" stroke="#c6e5f5" />
    <circle cx="11" cy="14" r="8" fill="#ee7422" stroke="#ffc794" /><path d="M8 8.500l8.500 5.500L8 19.500z" fill="#fff" />
  </svg>
);
const RarIcon = () => (
  <svg width="34" height="28" viewBox="0 0 34 28">
    <path d="M1 2l20-1 11 8H8z" fill="#7a3b2b" />
    <path d="M8 8h24v6H8z" fill="#a530a0" /><path d="M8 14h24v6H8z" fill="#1d46c8" /><path d="M8 20h24v6H8z" fill="#209a30" />
    <path d="M1 2l7 6v18l-6-4z" fill="#ddd" /><path d="M2 7l6 5M2 10l6 5M2 14l6 4M2 18l6 4" stroke="#222" />
    <path d="M8 13.500h24M8 19.500h24" stroke="#111" /><path d="M11 8v18" stroke="#e8c040" />
    <path d="M10 2l11 7v17h4V9L14 1z" fill="#8a5a24" /><rect x="20.500" y="12" width="5" height="5" fill="none" stroke="#eee" strokeWidth="1.200" />
  </svg>
);
const PaintIcon = () => (
  <svg width="32" height="34" viewBox="0 0 32 34">
    <rect x="1" y="2" width="25" height="30" fill="#fff" stroke="#999" strokeWidth=".5" />
    <rect x="3" y="4" width="21" height="24" fill="#2456b0" />
    <path d="M4 14q3-7 8-5t5 3 7-1v8q-8 5-12 4t-9 1z" fill="#b9d0ee" /><path d="M8 14q4-3 7 0t6 1-4 5-9-1z" fill="#f2f7fd" /><path d="M3 23h21v5H3z" fill="#16294e" />
    <path d="M30 10L15 23" stroke="#b81c28" strokeWidth="2.400" /><path d="M16 22q-4 1-5 6-2 1-4 1 8 2 11-5z" fill="#333" />
  </svg>
);
const ChromeIcon = () => (
  <svg width="29" height="29" viewBox="0 0 28 28">
    <circle cx="14" cy="14" r="13.500" fill="#3fa648" />
    <path d="M2 7.500A13.500 13.500 0 0 1 26.500 9H14l-6 7z" fill="#dc3a2c" />
    <path d="M26.500 9A13.500 13.500 0 0 1 13.500 27.500L20 16l-3-7z" fill="#fbd02c" />
    <circle cx="14" cy="14" r="6.500" fill="#f3f3f3" /><circle cx="14" cy="14" r="5" fill="#3c82cc" />
  </svg>
);
const IcqIcon = () => (
  <svg width="32" height="32" viewBox="0 0 32 32">
    {[22, 67, 112, 157, 202, 292, 337, 247].map(a => (
      <ellipse key={a} cx="16" cy="6.500" rx="4" ry="6" fill={a === 247 ? '#d82020' : '#28a818'} stroke={a === 247 ? '#8b1010' : '#106808'} strokeWidth=".7" transform={`rotate(${a} 16 16)`} />
    ))}
    <circle cx="16" cy="16" r="3.400" fill="#f7d838" />
  </svg>
);
const FolderIcon = () => (
  <svg width="34" height="32" viewBox="0 0 34 32">
    <path d="M2 3h9l2 3h8l1 2h9v21H2z" fill="#eccf72" stroke="#b99a42" strokeWidth=".8" />
    <path d="M5 3h5v3H5z" fill="#2aa83c" /><path d="M14 5h4v3h-4z" fill="#d24030" /><path d="M21 8h5v3h-5z" fill="#2b7fd0" />
    <path d="M2 9h17l3 3h9v16H2z" fill="#f5e29a" />
    <path d="M8 31v-8q0-3 4-3h12q4 0 4 3v8" fill="none" stroke="#68b8e2" strokeWidth="4" /><path d="M8 24v-2q0-3 4-3h12" fill="none" stroke="#c3e9fa" />
  </svg>
);

const App = () => (
  <Screen>
    <Global />
    <TitleBar>
      <AppIcon><svg width="12" height="15" viewBox="0 0 24 31"><MayaMark /></svg></AppIcon>
      <TitleText>UV Texture Editor</TitleText>
      <WindowButtons>
        <WinBtn $w={29}><svg width="12" height="16"><rect x="1.500" y="8.500" width="9" height="3" fill="#fff" stroke="#454d5c" /></svg></WinBtn>
        <WinBtn $w={27}>
          <svg width="12" height="16"><path d="M4.500 1.500h6v8h-6z" fill="#eee" stroke="#454d5c" /><path d="M1.500 4.500h7v7h-7z" fill="#fff" stroke="#454d5c" /><path d="M4 7h2v2H4z" fill="#8796ad" stroke="#454d5c" /></svg>
        </WinBtn>
        <WinBtn $w={46} $close><svg width="14" height="16"><path d="M4 3.500l6 7M10 3.500l-6 7" stroke="#4d4350" strokeWidth="4.500" /><path d="M4 3.500l6 7M10 3.500l-6 7" stroke="#fff" strokeWidth="2.500" /></svg></WinBtn>
      </WindowButtons>
    </TitleBar>

    <Client>
      <MenuBar>
        {([['Polygons', 58.5], ['Subdivs', 52], ['View', 37], ['Select', 43.5], ['Tool', 34.5], ['Image', 45], ['Textures', 56.5], ['UV Sets', 52], ['Help', 30]] as [string, number][]).map(([t, w]) => (
          <MenuItem key={t} $w={w}>{t}</MenuItem>
        ))}
      </MenuBar>
      <ToolBar>
        {GROUPS.map(([a, b]) => (
          <Group key={a}>
            <Handle />
            <Rows><Row>{renderIcons(a)}</Row><Row>{renderIcons(b)}</Row></Rows>
          </Group>
        ))}
        <Group>
          <Handle />
          <Rows>
            <Row><NumField>0.277</NumField><NumField>0.352</NumField>{renderIcons('uvsync uvabs')}</Row>
            <Row $lift={3}>{renderIcons('copy paste dimu dimv shellswap cycle')}</Row>
          </Rows>
        </Group>
      </ToolBar>
      <UvCanvas />
    </Client>

    <TaskBar>
      <Orb>
        <svg width="38" height="39" viewBox="0 0 38 39">
          <defs>
            <radialGradient id="orb" cx=".5" cy=".85" r=".8"><stop offset="0" stopColor="#35c4e8" /><stop offset=".5" stopColor="#1b6298" /><stop offset="1" stopColor="#4c7391" /></radialGradient>
            <linearGradient id="gloss" x2="0" y2="1"><stop offset="0" stopColor="#fff" stopOpacity=".65" /><stop offset="1" stopColor="#fff" stopOpacity=".15" /></linearGradient>
          </defs>
          <circle cx="19" cy="19" r="18" fill="url(#orb)" stroke="#8fb0c4" />
          <path d="M3 17a16 16 0 0 1 32 0q-16 6-32 0z" fill="url(#gloss)" />
          <path d="M11 10q4-3 8 0l-2 8q-4-2-8 0z" fill="#ee6b31" /><path d="M20 10q4 3 9 1l-2 8q-5 2-9-1z" fill="#8dc63f" />
          <path d="M8.500 19.500q4-2 8 0l-2 8q-4-2-8 0z" fill="#4ba6e0" /><path d="M18 20q4 3 9 1l-2 8q-5 2-9-1z" fill="#fcd03c" />
        </svg>
      </Orb>
      <Slots>
        <Slot $mode="open" $extra={8}><IeIcon /></Slot>
        <Slot><WmpIcon /></Slot>
        <Slot><RarIcon /></Slot>
        <Slot><PaintIcon /></Slot>
        <Slot><ChromeIcon /></Slot>
        <Slot><SIcon /></Slot>
        <Slot><SIcon /></Slot>
        <Slot $mode="open"><IcqIcon /></Slot>
        <Slot $mode="open" $extra={5}><FolderIcon /></Slot>
        <Slot $mode="active" $extra={5}><svg width="24" height="31" viewBox="0 0 24 31"><MayaMark /></svg></Slot>
      </Slots>
      <Tray>
        <Lang>DE</Lang>
        <TrayIcons>
          <svg width="66" height="24" viewBox="0 0 66 24">
            <path d="M1 12l4-4 4 4z" fill="#eee" />
            <path d="M22.500 3v14" stroke="#fff" strokeWidth="1.500" /><path d="M24 4q3-1 5 1t6 0v6q-3 2-6 0t-5 0z" fill="#f0f0f0" />
            <circle cx="32" cy="13" r="4.500" fill="#d72c1c" stroke="#fbb" strokeWidth=".6" /><path d="M30 11l4 4M34 11l-4 4" stroke="#fff" strokeWidth="1.500" />
            <path d="M47 15v-2M50 15v-4M53.500 15v-6M57 15V7M60.500 15V4" stroke="#60656a" strokeWidth="2.400" />
            <path d="M53 9l8 8M61 9l-8 8" stroke="#e01818" strokeWidth="2" />
          </svg>
        </TrayIcons>
        <ShowDesktop />
      </Tray>
    </TaskBar>
  </Screen>
);

export default App;
